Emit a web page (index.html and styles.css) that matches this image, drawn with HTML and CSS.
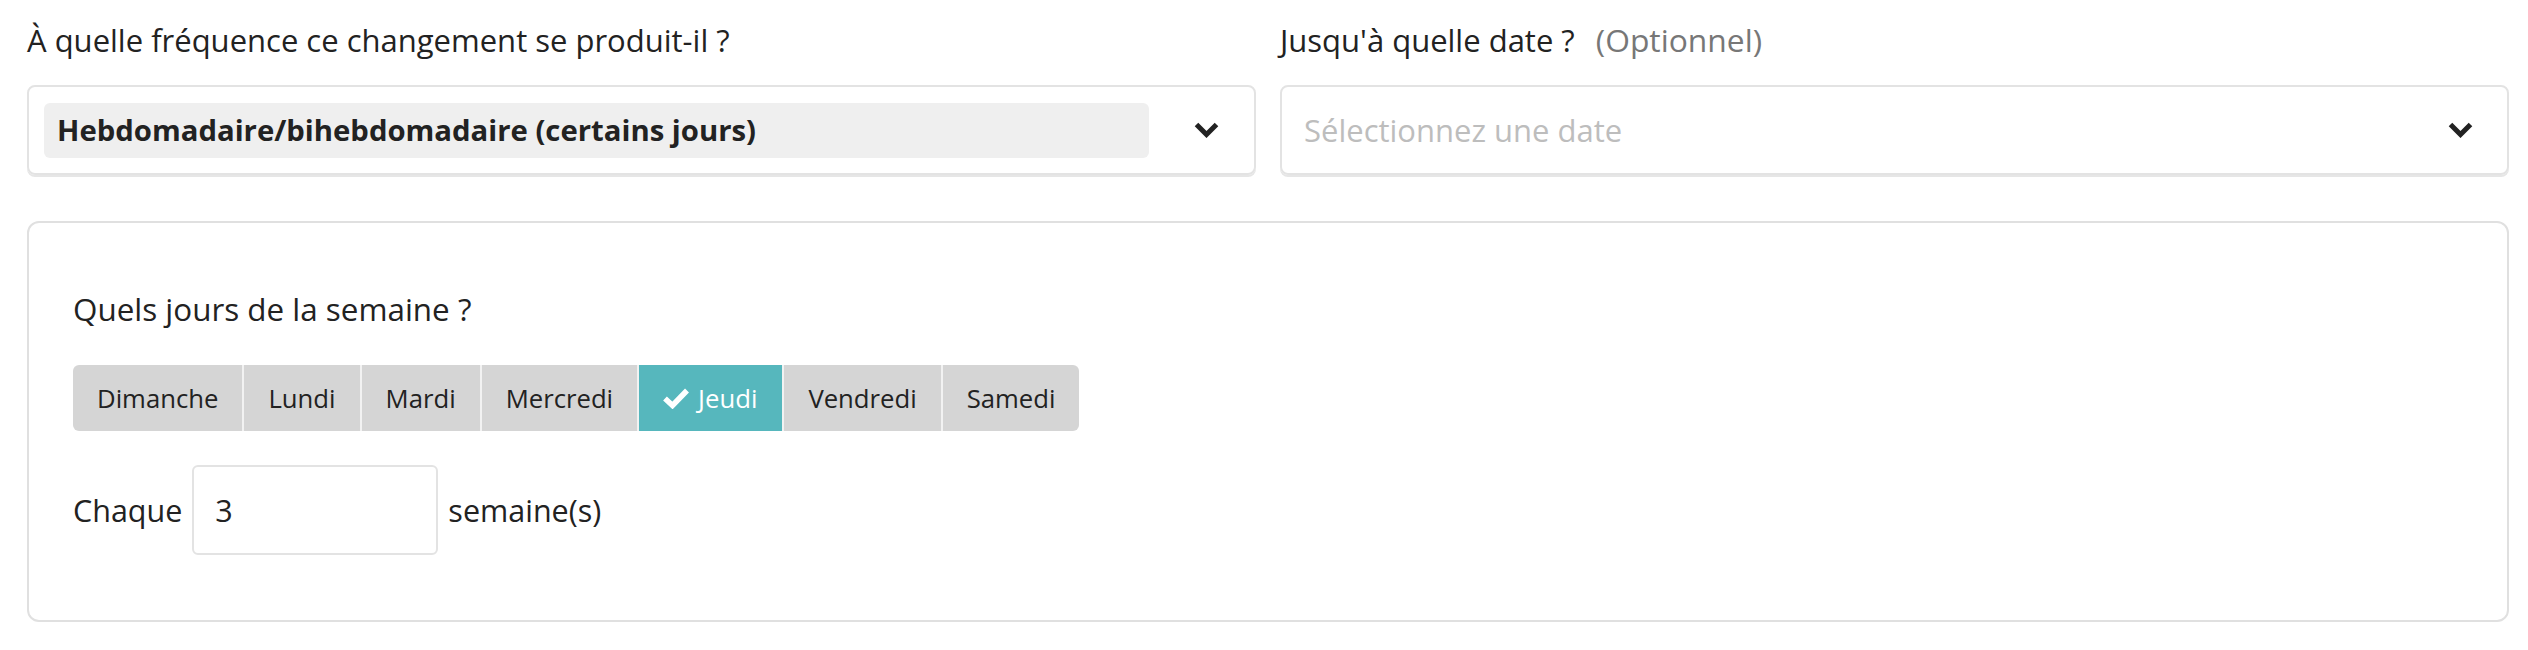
FILE: index.html
```html
<!DOCTYPE html>
<html lang="fr">
<head>
<meta charset="utf-8">
<title>Fréquence</title>
<link rel="stylesheet" href="styles.css">
</head>
<body>
<div class="page">
  <div class="row">
    <div class="field">
      <label class="label">À quelle fréquence ce changement se produit-il ?</label>
      <div class="select">
        <span class="pill">Hebdomadaire/bihebdomadaire (certains jours)</span>
        <svg class="chev" viewBox="0 0 25 16" width="25" height="16"><path d="M2.5 2.5 L12.5 12.5 L22.5 2.5" fill="none" stroke="#222" stroke-width="5"/></svg>
      </div>
    </div>
    <div class="field">
      <label class="label">Jusqu'à quelle date ? <span class="opt">(Optionnel)</span></label>
      <div class="select select-date">
        <span class="placeholder">Sélectionnez une date</span>
        <svg class="chev" viewBox="0 0 25 16" width="25" height="16"><path d="M2.5 2.5 L12.5 12.5 L22.5 2.5" fill="none" stroke="#222" stroke-width="5"/></svg>
      </div>
    </div>
  </div>
  <div class="panel">
    <div class="panel-label">Quels jours de la semaine ?</div>
    <div class="days">
      <span class="day">Dimanche</span>
      <span class="day">Lundi</span>
      <span class="day">Mardi</span>
      <span class="day">Mercredi</span>
      <span class="day day-on"><svg class="check" viewBox="0 0 28 22" width="28" height="22"><path d="M3 11.5 L10.5 18.5 L25 3.5" fill="none" stroke="#fff" stroke-width="5.5"/></svg>Jeudi</span>
      <span class="day">Vendredi</span>
      <span class="day">Samedi</span>
    </div>
    <div class="every">
      <span>Chaque</span>
      <span class="num">3</span>
      <span>semaine(s)</span>
    </div>
  </div>
</div>
</body>
</html>
```

FILE: styles.css
```css
* { box-sizing: border-box; }
html, body { margin: 0; padding: 0; background: #fff; }
body { font-family: "Open Sans", "Noto Sans", sans-serif; color: #222; }

.page { padding: 20px 19px 0 27px; }

.row {
  display: grid;
  grid-template-columns: 1fr 1fr;
  gap: 24px;
}

.label {
  display: block;
  font-size: 31px;
  line-height: 40px;
  height: 40px;
  margin-bottom: 25px;
  white-space: nowrap;
}
.opt { color: #777; margin-left: 13px; font-size: 31.8px; }

.select {
  height: 90px;
  border: 2px solid #e3e3e3;
  border-radius: 8px;
  box-shadow: 0 2px 0 #e6e6e6;
  display: flex;
  align-items: center;
  padding: 0 35px 0 15px;
}
.select-date { padding-left: 22px; padding-right: 34px; }

.pill {
  flex: 1;
  height: 55px;
  margin-right: 45px;
  background: #efefef;
  border-radius: 6px;
  padding-left: 13px;
  display: flex;
  align-items: center;
  font-weight: 700;
  font-size: 29.3px;
  white-space: nowrap;
}
.placeholder {
  flex: 1;
  color: #bdbdbd;
  font-size: 31px;
}
.chev { display: block; flex: none; }

.panel {
  margin-top: 46px;
  border: 2px solid #e0e0e0;
  border-radius: 12px;
  padding: 66px 44px 65px;
}
.panel-label {
  font-size: 31.4px;
  line-height: 40px;
  margin-bottom: 36px;
}

.days {
  display: inline-flex;
  border-radius: 6px;
  overflow: hidden;
  height: 66px;
  vertical-align: top;
}
.day {
  display: flex;
  align-items: center;
  padding: 0 24px;
  background: #d5d5d5;
  font-size: 25.7px;
  color: #222;
}
.day + .day { border-left: 2px solid #f2f2f2; }
.day-on {
  background: #56b7bd;
  color: #fff;
  padding: 0 25px 0 23px;
}
.check { margin-right: 8px; display: block; }

.every {
  display: flex;
  align-items: center;
  gap: 10px;
  margin-top: 34px;
  font-size: 30.5px;
}
.num {
  width: 246px;
  height: 90px;
  border: 2px solid #e3e3e3;
  border-radius: 6px;
  padding-left: 21px;
  display: flex;
  align-items: center;
}
```
